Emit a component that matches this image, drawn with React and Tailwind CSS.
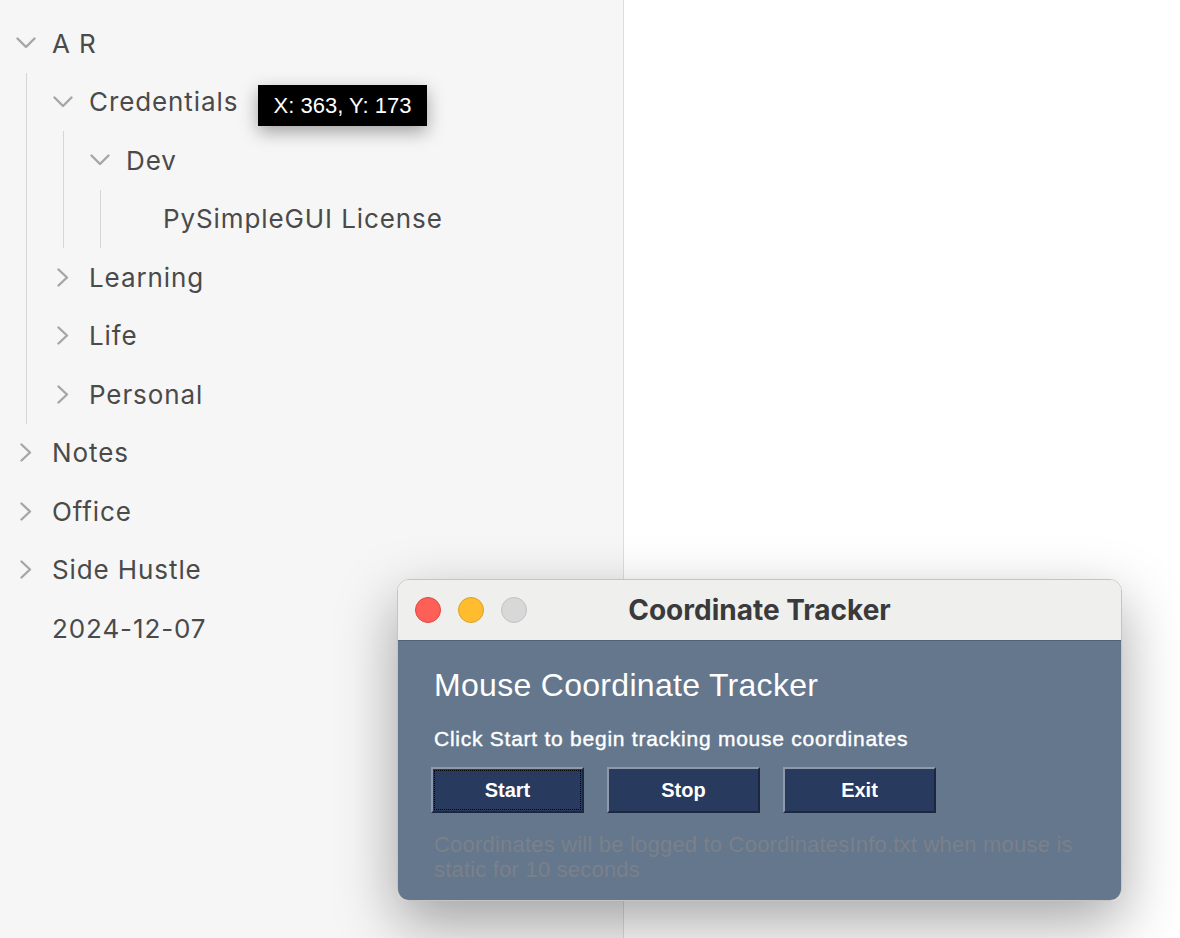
import React from 'react';

const ChevronDown = () => (
    <svg width="20" height="12" viewBox="0 0 20 12" fill="none">
        <polyline points="1.5,1.5 10,10 18.5,1.5" stroke="#a6a6a6" strokeWidth="2.4" strokeLinecap="round" strokeLinejoin="round" />
    </svg>
);

const ChevronRight = () => (
    <svg width="14" height="19" viewBox="0 0 14 19" fill="none">
        <polyline points="2.5,1.5 11,9.5 2.5,17.5" stroke="#a6a6a6" strokeWidth="2.4" strokeLinecap="round" strokeLinejoin="round" />
    </svg>
);

// 트리 한 줄
function Row({ label, open, leaf }) {
    return (
        <div className="flex items-center h-[58.5px]">
            <div className="w-[52px] flex justify-center items-center shrink-0">
                {leaf ? null : open ? <ChevronDown /> : <ChevronRight />}
            </div>
            <span className="text-[26px] tracking-[0.9px] text-[#4a4a4a] whitespace-nowrap">{label}</span>
        </div>
    );
}

// 하위 항목 들여쓰기 + 가이드 라인
function Children({ children }) {
    return <div className="ml-[26px] border-l border-[#d6d6d6] pl-[10px]">{children}</div>;
}

export default function App() {
    return (
        <div className="relative w-[1180px] h-[938px] overflow-hidden flex bg-white" style={{ fontFamily: 'Inter, "Noto Sans", sans-serif' }}>
            {/* 사이드바 트리 */}
            <div className="w-[624px] h-full bg-[#f6f6f6] border-r border-[#dedede] pt-[14px] shrink-0">
                <Row label="A R" open />
                <Children>
                    <Row label="Credentials" open />
                    <Children>
                        <Row label="Dev" open />
                        <Children>
                            <Row label="PySimpleGUI License" leaf />
                        </Children>
                    </Children>
                    <Row label="Learning" />
                    <Row label="Life" />
                    <Row label="Personal" />
                </Children>
                <Row label="Notes" />
                <Row label="Office" />
                <Row label="Side Hustle" />
                <Row label="2024-12-07" leaf />
            </div>
            <div className="flex-1" />

            {/* 좌표 툴팁 */}
            <div
                className="absolute left-[258px] top-[85px] w-[169px] h-[41px] bg-black text-white flex items-center justify-center text-[22px] shadow-[0_6px_18px_rgba(0,0,0,0.35)]"
                style={{ fontFamily: '"Liberation Sans", Arial, sans-serif' }}
            >
                X: 363, Y: 173
            </div>

            {/* 창 */}
            <div className="absolute left-[397px] top-[579px] w-[725px] h-[322px] rounded-[12px] overflow-hidden border border-[#c4c4c4] shadow-[0_22px_60px_rgba(0,0,0,0.35)] flex flex-col">
                <div className="relative h-[61px] bg-[#efefee] border-b border-[#52627a] flex items-center shrink-0">
                    <div className="flex items-center gap-[17px] pl-[17px]">
                        <span className="w-[26px] h-[26px] rounded-full bg-[#fe5f57] border border-[#e14640]" />
                        <span className="w-[26px] h-[26px] rounded-full bg-[#febc2e] border border-[#df9f21]" />
                        <span className="w-[26px] h-[26px] rounded-full bg-[#d8d8d8] border border-[#c2c2c2]" />
                    </div>
                    <div className="absolute inset-0 flex items-center justify-center text-[28px] font-bold text-[#3a3a3a] pointer-events-none">
                        Coordinate Tracker
                    </div>
                </div>
                <div
                    className="flex-1 bg-[#64778d] pl-[36px] pr-[36px] pt-[25px]"
                    style={{ fontFamily: '"Liberation Sans", Arial, sans-serif' }}
                >
                    <div className="text-[32px] leading-[38px] tracking-[0.3px] text-white">Mouse Coordinate Tracker</div>
                    <div className="mt-[23px] text-[21px] leading-[24px] tracking-[0.75px] text-white [-webkit-text-stroke:0.4px_white]">Click Start to begin tracking mouse coordinates</div>
                    <div className="mt-[16px] -ml-[3px] flex gap-[23px]">
                        {['Start', 'Stop', 'Exit'].map((b, i) => (
                            <button
                                key={b}
                                className="w-[153px] h-[46px] bg-[#283a5d] border-[2px] border-t-[#8e9aab] border-l-[#8e9aab] border-b-[#1c2740] border-r-[#1c2740] flex items-center justify-center p-[2px]"
                            >
                                <span className={`w-full h-full flex items-center justify-center text-white text-[20px] font-bold ${i === 0 ? 'outline-1 outline-dotted outline-black' : ''}`}>
                                    {b}
                                </span>
                            </button>
                        ))}
                    </div>
                    <div className="mt-[19px] text-[22px] leading-[25px] tracking-[0.2px] text-[#7b8089]">
                        Coordinates will be logged to CoordinatesInfo.txt when mouse is static for 10 seconds
                    </div>
                </div>
            </div>
        </div>
    );
}
